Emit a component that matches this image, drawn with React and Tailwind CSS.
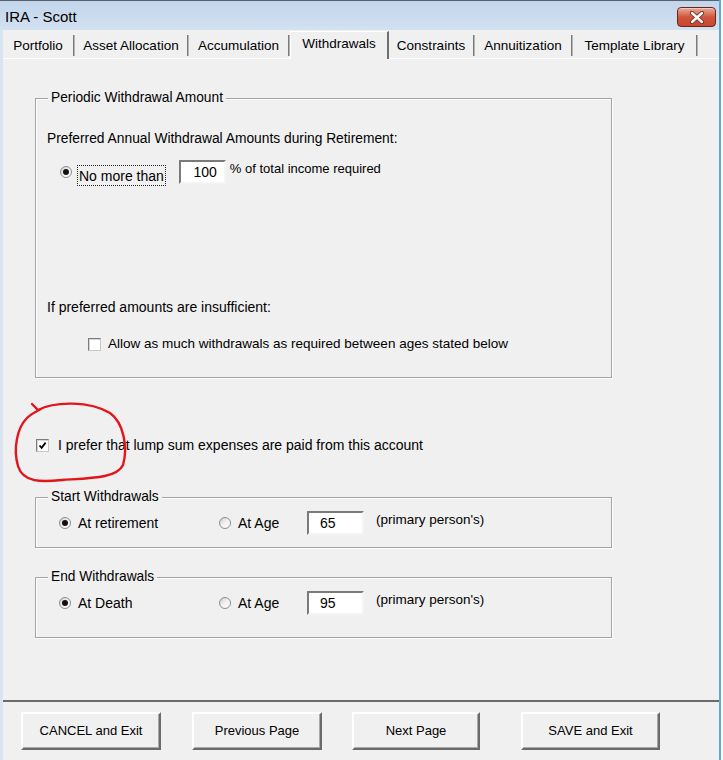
import React from "react";

const tabs = [
  { label: "Portfolio", cls: "w-[72px]" },
  { label: "Asset Allocation", cls: "w-[114px]" },
  { label: "Accumulation", cls: "w-[101px]" },
  { label: "Withdrawals", cls: "w-[99px]", active: true },
  { label: "Constraints", cls: "w-[86px]" },
  { label: "Annuitization", cls: "w-[98px]" },
  { label: "Template Library", cls: "w-[125px]" },
];

const buttons = [
  { label: "CANCEL and Exit", cls: "w-[140px] ml-[18px]" },
  { label: "Previous Page", cls: "w-[130px] ml-[31px]" },
  { label: "Next Page", cls: "w-[128px] ml-[30px]" },
  { label: "SAVE and Exit", cls: "w-[139px] ml-[41px]" },
];

function Radio({ checked, className = "" }) {
  return (
    <span
      className={
        "w-[12px] h-[12px] shrink-0 rounded-full border border-[#8c8c8c] bg-gradient-to-br from-[#cfcfcf] via-[#f2f2f2] to-white flex items-center justify-center " +
        className
      }
    >
      {checked && <span className="w-[6px] h-[6px] rounded-full bg-[#111]" />}
    </span>
  );
}

function Checkbox({ checked }) {
  return (
    <span className="w-[13px] h-[13px] shrink-0 border border-t-[#7c7c7c] border-l-[#7c7c7c] border-r-[#c8c8c8] border-b-[#c8c8c8] bg-white shadow-[inset_1px_1px_0_#d6d6d6] flex items-center justify-center">
      {checked && (
        <svg width="9" height="9" viewBox="0 0 9 9">
          <path d="M1.5 4.5 L3.6 6.8 L7.6 1.6" stroke="#000" strokeWidth="1.8" fill="none" />
        </svg>
      )}
    </span>
  );
}

function Field({ value, className = "" }) {
  return (
    <div
      className={
        "h-[24px] shrink-0 bg-white border-2 border-t-[#7a7a7a] border-l-[#7a7a7a] border-r-[#f4f4f4] border-b-[#f4f4f4] flex items-center text-[14px] " +
        className
      }
    >
      {value}
    </div>
  );
}

function Group({ title, className = "", children }) {
  return (
    <div
      className={
        "relative w-[577px] border border-[#a3a3a3] shadow-[inset_1px_1px_0_#ffffff,1px_1px_0_#ffffff] " +
        className
      }
    >
      <span className="absolute -top-[9px] left-[12px] px-[3px] bg-[#f0f0f0] text-[13.75px] leading-[16px]">
        {title}
      </span>
      {children}
    </div>
  );
}

function AgeRow({ first, value }) {
  return (
    <div className="h-[24px] flex items-center pl-[23px]">
      <div className="w-[160px] flex items-center">
        <Radio checked />
        <span className="ml-[7px] text-[14px] leading-[16px]">{first}</span>
      </div>
      <div className="w-[88px] flex items-center">
        <Radio />
        <span className="ml-[7px] text-[14px] leading-[16px]">At Age</span>
      </div>
      <Field value={value} className="w-[57px] pl-[11px]" />
      <span className="ml-[12px] self-start mt-[1px] text-[13.5px] leading-[16px]">(primary person's)</span>
    </div>
  );
}

export default function App() {
  return (
    <div className="relative w-[723px] h-[760px] bg-white overflow-hidden text-black font-['Liberation_Sans',Arial,sans-serif]">
      <div className="w-[721px] h-[760px] flex flex-col bg-[#f0f0f0] border-r-2 border-[#5ea8da]">
        {/* title bar */}
        <div className="h-[30px] shrink-0 flex items-start border-t border-[#56616d] bg-gradient-to-b from-[#c2d5eb] to-[#d3e1f1]">
          <span className="pl-[5px] pt-[7px] text-[15px] leading-[18px]">IRA - Scott</span>
          <div className="ml-auto mr-[3px] mt-[6px] w-[39px] h-[20px] rounded-[4px] border border-[#6b2416] bg-gradient-to-b from-[#e7ab9b] via-[#cf553c] to-[#c8472f] shadow-[inset_0_1px_0_#f3c9bd] flex items-center justify-center">
            <svg width="16" height="13" viewBox="0 0 16 13">
              <path d="M3 2 L13 11 M13 2 L3 11" stroke="#7a2a1b" strokeWidth="4.2" strokeLinecap="round" />
              <path d="M3 2 L13 11 M13 2 L3 11" stroke="#ffffff" strokeWidth="2.4" strokeLinecap="round" />
            </svg>
          </div>
        </div>

        <div className="flex-1 flex flex-col border-l-[3px] border-[#d8e4f2]">
          {/* tab strip */}
          <div className="h-[28px] shrink-0 flex items-end text-[13.5px]">
            {tabs.map((t) =>
              t.active ? (
                <div
                  key={t.label}
                  className={
                    "relative z-10 h-[28px] -mb-[1px] pb-[2px] flex items-center justify-center bg-[#f0f0f0] border-t border-l border-white border-r-2 border-r-[#6f6f6f] " +
                    t.cls
                  }
                >
                  {t.label}
                </div>
              ) : (
                <div key={t.label} className={"h-[23px] flex items-center " + t.cls}>
                  <span className="flex-1 text-center">{t.label}</span>
                  <span className="w-[2px] h-[21px] self-start bg-[#7a7a7a] border-r border-[#b4b4b4]" />
                </div>
              )
            )}
          </div>

          {/* tab page */}
          <div className="flex-1 border-t border-white pl-[32px] pt-[39px] text-[14px]">
            <Group title="Periodic Withdrawal Amount" className="h-[280px] pl-[11px] pt-[32px]">
              <div className="leading-[16px] text-[13.8px]">Preferred Annual Withdrawal Amounts during Retirement:</div>
              <div className="mt-[13px] h-[24px] flex items-start">
                <Radio checked className="ml-[13px] mt-[6px]" />
                <span className="ml-[5px] mt-[5px] h-[21px] px-[1px] flex items-center border border-dotted border-[#222] leading-[16px]">
                  No more than
                </span>
                <Field value="100" className="ml-[13px] w-[47px] justify-end pr-[7px]" />
                <span className="ml-[4px] mt-[1px] text-[13px] leading-[16px]">% of total income required</span>
              </div>
              <div className="mt-[115px] leading-[16px]">If preferred amounts are insufficient:</div>
              <div className="mt-[21px] h-[16px] flex items-center ml-[41px]">
                <Checkbox />
                <span className="ml-[7px] leading-[16px] text-[13.5px]">Allow as much withdrawals as required between ages stated below</span>
              </div>
            </Group>

            <div className="mt-[59px] h-[16px] flex items-center ml-[1px]">
              <Checkbox checked />
              <span className="ml-[9px] leading-[16px]">I prefer that lump sum expenses are paid from this account</span>
            </div>

            <Group title="Start Withdrawals" className="mt-[44px] h-[51px] pt-[13px]">
              <AgeRow first="At retirement" value="65" />
            </Group>

            <Group title="End Withdrawals" className="mt-[29px] h-[61px] pt-[13px]">
              <AgeRow first="At Death" value="95" />
            </Group>
          </div>

          <div className="h-[2px] shrink-0 bg-[#6b6b6b]" />

          {/* dialog buttons */}
          <div className="h-[58px] shrink-0 flex items-start pt-[10px]">
            {buttons.map((b) => (
              <div
                key={b.label}
                className={
                  "h-[38px] flex items-center justify-center text-[13px] bg-[#f0f0f0] border-2 border-t-white border-l-white border-r-[#6a6a6a] border-b-[#6a6a6a] shadow-[inset_-1px_-1px_0_#a9a9a9] " +
                  b.cls
                }
              >
                {b.label}
              </div>
            ))}
          </div>
        </div>
      </div>

      {/* red pen circle around the lump-sum option */}
      <svg className="absolute left-0 top-0 pointer-events-none" width="723" height="760" viewBox="0 0 723 760">
        <path
          d="M32 404 L38 410 C 55 401, 90 401, 110 413 C 124 423, 128 448, 123 465 C 117 478, 92 478, 62 480 C 42 482, 23 483, 18 466 C 13 449, 17 428, 27 418 C 31 414, 35 412, 41 409"
          fill="none"
          stroke="#e3151c"
          strokeWidth="2.4"
          strokeLinecap="round"
        />
      </svg>
    </div>
  );
}
